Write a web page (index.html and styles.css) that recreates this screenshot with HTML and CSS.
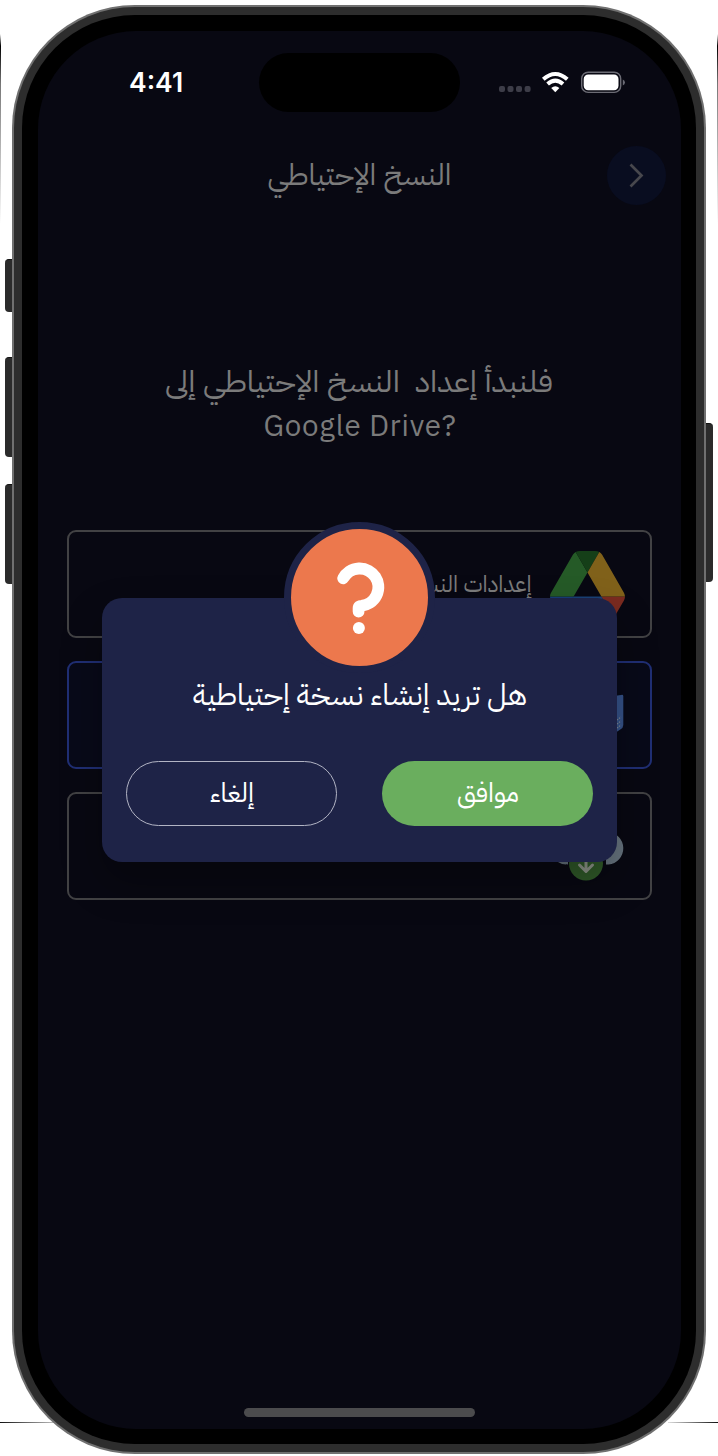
FILE: index.html
```html
<!DOCTYPE html>
<html lang="ar">
<head>
<meta charset="utf-8">
<title>النسخ الإحتياطي</title>
<link rel="stylesheet" href="styles.css">
</head>
<body>
<div class="stage">
  <i class="sliver sliver-left"></i><i class="sliver sliver-right"></i>
  <i class="ground ground-left"></i><i class="ground ground-right"></i>
  <i class="key key-action"></i><i class="key key-up"></i><i class="key key-down"></i><i class="key key-power"></i>
  <div class="phone"><div class="band"><div class="bezel">
    <main class="screen">
      <div class="status">
        <span class="time">4:41</span>
        <span class="island"></span>
        <svg class="indicators" width="128" height="24" viewBox="0 0 128 24">
          <g fill="#3d3d48"><rect x="1" y="15" width="6" height="6" rx="2"/><rect x="9.5" y="15" width="6" height="6" rx="2"/><rect x="18" y="15" width="6" height="6" rx="2"/><rect x="26.6" y="15" width="6" height="6" rx="2"/></g>
          <g fill="none" stroke="#fff" stroke-width="4"><path d="M45.3 8.3Q57.3-2.3 69.3 8.3"/><path d="M49.6 13Q57.3 6.2 65 13"/></g>
          <path fill="#fff" d="M53.2 17Q57.3 13.4 61.4 17L57.3 21.2Z"/>
          <rect x="83.7" y="1.2" width="39" height="20.2" rx="6.5" fill="none" stroke="#6c6c75" stroke-width="1.4"/>
          <rect x="85.7" y="3.4" width="34.8" height="15.8" rx="4.5" fill="#fff"/>
          <path d="M124.8 8.5v6Q127 13.5 127 11.5T124.8 8.5" fill="#6c6c75"/>
        </svg>
      </div>
      <header class="bar">
        <svg class="label title" width="200" height="60"><text x="99.5" y="39" textLength="184" lengthAdjust="spacingAndGlyphs">النسخ الإحتياطي</text></svg>
        <span class="back"><svg width="58" height="58" viewBox="0 0 58 58"><path d="M23.5 18.5L34.5 29.5L23.5 40.5"/></svg></span>
      </header>
      <section class="intro">
        <svg class="label" width="420" height="50"><text x="209" y="36.5" textLength="388" lengthAdjust="spacingAndGlyphs" xml:space="preserve">فلنبدأ إعداد  النسخ الإحتياطي إلى</text></svg>
        <svg class="label latin" width="420" height="46"><text x="210" y="31">Google Drive?</text></svg>
      </section>
      <section class="cards">
        <div class="card">
          <svg class="label small" width="140" height="50"><text x="77" y="33" textLength="125" lengthAdjust="spacingAndGlyphs">إعدادات النسخ</text></svg>
          <svg width="75" height="67" viewBox="0 0 87.3 78">
            <path d="m6.6 66.85 3.85 6.65c.8 1.4 1.95 2.5 3.3 3.3l13.75-23.8h-27.5c0 1.55.4 3.1 1.2 4.5z" fill="#163d78"/>
            <path d="m43.65 25-13.75-23.8c-1.35.8-2.5 1.9-3.3 3.3l-25.4 44a9.06 9.06 0 0 0-1.2 4.5h27.5z" fill="#255a27"/>
            <path d="m73.55 76.8c1.35-.8 2.5-1.9 3.3-3.3l1.6-2.75 7.65-13.25c.8-1.4 1.2-2.95 1.2-4.5h-27.5l5.85 11.5z" fill="#7b2b20"/>
            <path d="m43.65 25 13.75-23.8c-1.35-.8-2.9-1.2-4.5-1.2h-18.5c-1.6 0-3.15.45-4.5 1.2z" fill="#153f18"/>
            <path d="m59.8 53h-32.3l-13.75 23.8c1.35.8 2.9 1.2 4.5 1.2h50.8c1.6 0 3.15-.45 4.5-1.2z" fill="#194177"/>
            <path d="m73.4 26.5-12.7-22c-.8-1.4-1.95-2.5-3.3-3.3l-13.75 23.8 16.15 28h27.45c0-1.55-.4-3.1-1.2-4.5z" fill="#80611a"/>
          </svg>
        </div>
        <div class="card selected">
          <svg width="75" height="75" viewBox="0 0 75 75"><path d="M20 24L71 17Q73 16 73.3 18V47Q73 50 71 51L62 57H20Z" fill="#355289"/><path d="M67 50l4-3M67 46l4-3M67 42l4-3" stroke="#7b8794" stroke-width="1.2" stroke-dasharray="1.4 1"/></svg>
        </div>
        <div class="card">
          <svg width="75" height="75" viewBox="0 0 75 75"><path d="M18 55.5A16 16 0 0 1 15 24A23 23 0 0 1 58 23A16.3 16.3 0 0 1 58.5 55.5H56V40H18Z" fill="#67747f"/><path d="M8 53Q12 55.5 16 55.5V50H8Z" fill="#67747f"/><circle cx="36" cy="54.5" r="17" fill="#305a29"/><path d="M36 46V61.5M29.5 56L36 62.5L42.5 56" fill="none" stroke="#8f958b" stroke-width="3" stroke-linecap="round" stroke-linejoin="round"/></svg>
        </div>
      </section>
      <i class="home"></i>
      <div class="dialog">
        <div class="badge"><svg width="136" height="136" viewBox="0 0 136 136"><path d="M52.2 49.3A18.7 18.7 0 1 1 70.4 76.8Q67.6 76.8 67.6 79V82.5" fill="none" stroke="#fff" stroke-width="11.8" stroke-linecap="round" stroke-linejoin="round"/><circle cx="67.9" cy="99" r="6" fill="#fff"/></svg></div>
        <svg class="label message" width="360" height="60"><text x="180" y="31.5" textLength="334" lengthAdjust="spacingAndGlyphs">هل تريد إنشاء نسخة إحتياطية</text></svg>
        <div class="actions">
          <button class="cancel"><svg class="label" width="100" height="54"><text x="50" y="35" textLength="44" lengthAdjust="spacingAndGlyphs">إلغاء</text></svg></button>
          <button class="ok"><svg class="label" width="100" height="54"><text x="50" y="35" textLength="62" lengthAdjust="spacingAndGlyphs">موافق</text></svg></button>
        </div>
      </div>
    </main>
  </div></div></div>
</div>
</body>
</html>
```
FILE: styles.css
```css
* { box-sizing: border-box; }
body { margin: 0; background: #fff; }
svg { display: block; flex: none; }
.stage { position: relative; width: 718px; height: 1456px; padding: 5px 12px 2px; overflow: hidden; }
.phone { position: relative; height: 1449px; padding: 2px; border-radius: 123px; background: #707070; }
.band { height: 100%; padding: 8px; border-radius: 121px; background: #2d2d2d; }
.bezel { height: 100%; padding: 16px 15px 16px 16px; border-radius: 113px; background: #000; }
.screen { position: relative; display: flex; flex-direction: column; height: 1398px; border-radius: 98px; background: #080812; overflow: hidden; }
.key { position: absolute; left: 5px; width: 10px; background: #2b2b2b; border-radius: 4px 0 0 4px; border-top: 1px solid #111; }
.key-action { top: 259px; height: 53px; }
.key-up { top: 357px; height: 100px; }
.key-down { top: 484px; height: 100px; }
.key-power { left: 703px; top: 423px; height: 159px; border-radius: 0 4px 4px 0; }
.sliver { position: absolute; left: 0; top: 34px; width: 1px; height: 190px; background: linear-gradient(#fff, #000 12px, #777 50px, #fff); }
.sliver-right { left: 717px; }
.ground { position: absolute; top: 1422px; left: 0; width: 54px; height: 1px; background: linear-gradient(90deg, #111, #bbb); }
.ground-right { left: 668px; width: 50px; background: linear-gradient(270deg, #111, #ddd); }

.status { display: flex; align-items: flex-start; height: 115px; padding-top: 22px; }
.time { width: 221px; padding: 13px 0 0 91px; font: 600 26.5px/32px Inter, sans-serif; color: #fff; }
.island { width: 201px; height: 59px; border-radius: 30px; background: #000; }
.indicators { margin: 18px 0 0 38px; }

.label { overflow: visible; font-family: "IBM Plex Sans Arabic", "Noto Sans Arabic", "DejaVu Sans Condensed", "DejaVu Sans", sans-serif; font-size: 29.5px; font-weight: 400; fill: #7b7b7b; }
.label text { text-anchor: middle; direction: rtl; }
.latin { font-family: "IBM Plex Sans", "IBM Plex Sans Arabic", "Noto Sans", sans-serif; font-size: 29.5px; letter-spacing: .8px; }
.latin text { direction: ltr; unicode-bidi: bidi-override; }
.bar { display: flex; justify-content: flex-end; height: 60px; padding-right: 15.5px; }
.title { margin-right: 147px; }
.back { width: 59px; height: 59px; border-radius: 50%; background: #090d20; }
.back path { fill: none; stroke: #47474d; stroke-width: 2.7; }
.intro { display: flex; flex-direction: column; align-items: center; margin-top: 149px; height: 96px; }
.cards { display: flex; flex-direction: column; gap: 23px; margin-top: 79px; padding: 0 29px; }
.card { display: flex; justify-content: flex-end; align-items: center; height: 108px; padding-right: 25px; border: 2px solid #424244; border-radius: 9px; }
.selected { border-color: #202f75; background: #080a19; }
.small { font-size: 23.5px; margin-right: 18px; }
.home { position: absolute; left: 206px; bottom: 12px; width: 231px; height: 9px; border-radius: 5px; background: #4b4b4d; }

.dialog { position: absolute; left: 64px; top: 567px; width: 515px; height: 264px; display: flex; flex-direction: column; align-items: center; border-radius: 20px; background: #1e2347; box-shadow: 0 20px 40px rgba(0, 0, 0, .3); }
.badge { width: 151px; height: 151px; margin-top: -76px; border: 7.5px solid #1e2347; border-radius: 50%; background: #ec784d; }
.dialog .label { fill: #fff; }
.actions { display: flex; gap: 45px; margin-top: 28px; }
.actions button { display: flex; align-items: center; justify-content: center; width: 211px; height: 65px; padding: 0; border-radius: 33px; }
.cancel { border: 1px solid #b2b4c4; background: none; }
.ok { border: 0; background: #6aae5e; }
.actions .label { font-size: 26.5px; }
```
